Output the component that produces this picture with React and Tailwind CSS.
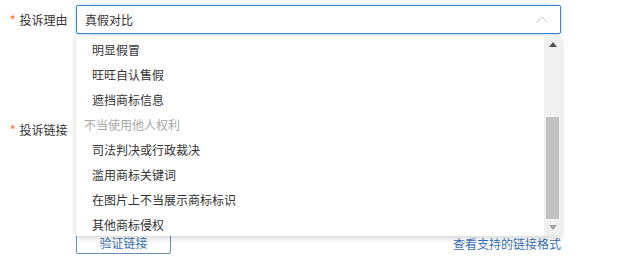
import React from 'react';

const items = [
    { label: '明显假冒' },
    { label: '旺旺自认售假' },
    { label: '遮挡商标信息' },
    { label: '不当使用他人权利', group: true },
    { label: '司法判决或行政裁决' },
    { label: '滥用商标关键词' },
    { label: '在图片上不当展示商标标识' },
    { label: '其他商标侵权' },
];

function Label({ children, className = 'items-center' }) {
    return (
        <div className={'w-[76px] shrink-0 pl-[10px] flex text-[12px] text-[#333] ' + className}>
            <span className="text-[#f60] mr-[4px] text-[12px]">*</span>
            {children}
        </div>
    );
}

export default function App() {
    return (
        <div
            className="relative w-[638px] h-[260px] bg-white pt-[5px] text-[12px] text-[#333]"
            style={{ fontFamily: '"Noto Sans CJK SC", "Microsoft YaHei", sans-serif' }}
        >
            {/* 投诉理由 */}
            <div className="flex h-[29px]">
                <Label>投诉理由</Label>
                <div className="w-[485px] h-[29px] border border-[#3f82c6] rounded-[2px] shadow-[0_0_3px_rgba(90,170,240,0.6)] flex items-center justify-between pl-[8px] pr-[12px]">
                    <span>真假对比</span>
                    <svg width="12" height="7" viewBox="0 0 12 7" fill="none">
                        <path d="M0.5 6.5 L6 1 L11.5 6.5" stroke="#c8c8c8" strokeWidth="1" />
                    </svg>
                </div>
            </div>

            {/* 投诉链接 */}
            <div className="flex mt-[84px]">
                <Label className="items-start h-[24px] leading-[24px]">
                    <span>投诉链接</span>
                </Label>
                <div className="w-[485px] flex flex-col">
                    <div className="h-[106px] border border-[#ccc] rounded-[2px]" />
                    <div className="flex items-end justify-between mt-[8px]">
                        <button className="w-[95px] h-[22px] border border-[#6a8db5] rounded-[2px] text-[#3a6fb0] text-[12px] leading-[20px]">
                            验证链接
                        </button>
                        <a className="text-[#3a6fb0] leading-[16px] mb-[2px]">查看支持的链接格式</a>
                    </div>
                </div>
            </div>

            {/* dropdown */}
            <div className="absolute left-[76px] top-[36px] w-[485px] h-[200px] bg-white shadow-[0_2px_6px_rgba(0,0,0,0.18)] flex">
                <ul className="flex-1 pt-[1px]">
                    {items.map((it) => (
                        <li
                            key={it.label}
                            className={
                                it.group
                                    ? 'h-[25px] leading-[25px] pl-[8px] text-[#a8a8a8]'
                                    : 'h-[25px] leading-[25px] pl-[16px] text-[#333]'
                            }
                        >
                            {it.label}
                        </li>
                    ))}
                </ul>
                <div className="w-[17px] bg-[#f0f0f0] flex flex-col items-center">
                    <div className="h-[17px] flex items-center justify-center">
                        <svg width="8" height="5" viewBox="0 0 8 5">
                            <path d="M0 5 L4 0 L8 5 Z" fill="#505050" />
                        </svg>
                    </div>
                    <div className="flex-1 w-full flex flex-col px-[2px]">
                        <div className="h-[64px]" />
                        <div className="flex-1 bg-[#c1c1c1]" />
                    </div>
                    <div className="h-[17px] flex items-center justify-center">
                        <svg width="8" height="5" viewBox="0 0 8 5">
                            <path d="M0 0 L8 0 L4 5 Z" fill="#a3a3a3" />
                        </svg>
                    </div>
                </div>
            </div>
        </div>
    );
}
